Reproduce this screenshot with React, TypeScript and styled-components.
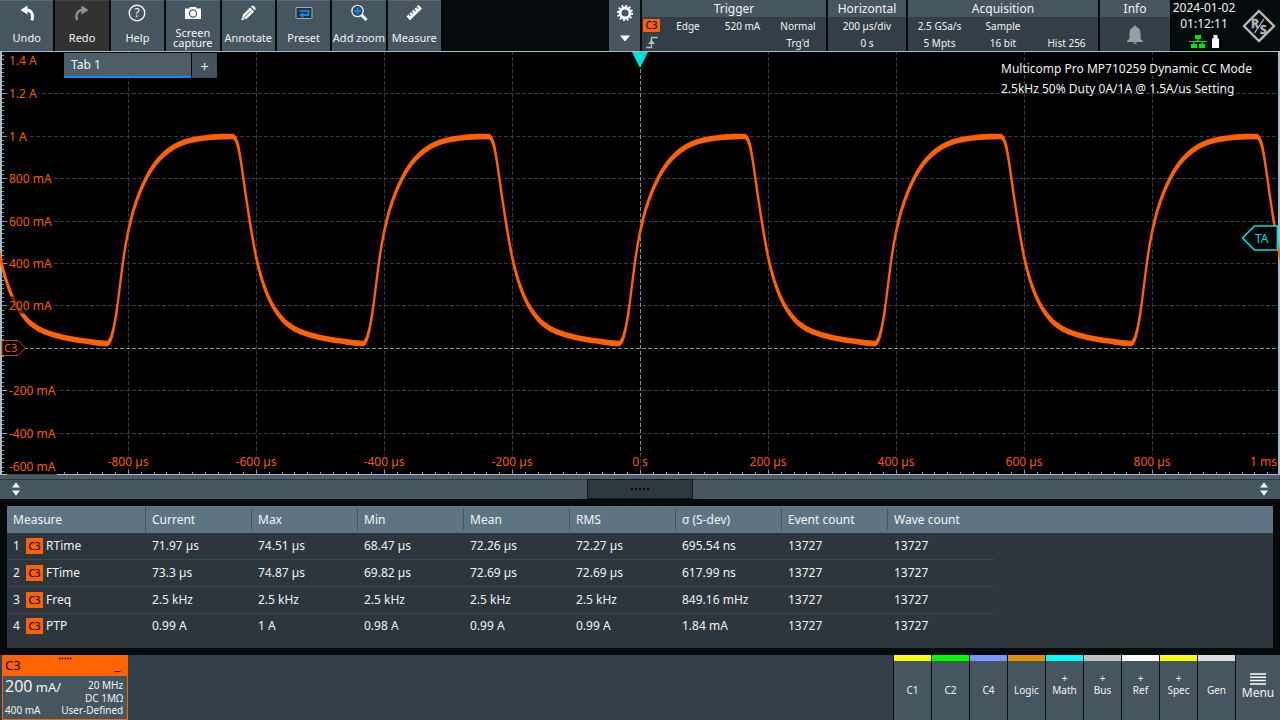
import React from 'react';
import styled, { createGlobalStyle, css } from 'styled-components';

const ORANGE = '#ff6200';
const SLATE = '#455661';
const PANEL = '#333f48';

const GlobalStyle = createGlobalStyle`
  * { box-sizing: border-box; }
  body {
    margin: 0;
    background: #050a0c;
    color: #f2f4f5;
    font-family: "Noto Sans", "Open Sans", sans-serif;
    font-size: 12px;
    line-height: 16px;
  }
  button {
    margin: 0;
    padding: 0;
    border: 0;
    color: inherit;
    font: inherit;
    cursor: pointer;
  }
`;

const Screen = styled.div`
  display: flex;
  flex-direction: column;
  min-height: 100vh;
`;

/* ---------- top bar ---------- */

const TopBar = styled.header`
  display: flex;
  gap: 2px;
  height: 51px;
  background: #050a0c;
`;

const ToolGroup = styled.nav`
  display: grid;
  grid-template-columns: repeat(8, 1fr);
  gap: 2px;
  flex: 0 0 441px;
`;

const ToolButton = styled.button<{ $off?: boolean }>`
  display: flex;
  flex-direction: column;
  align-items: center;
  padding: 1px 0 2px;
  background: ${(p) => (p.$off ? '#323232' : SLATE)};
  border-top: 1px solid ${(p) => (p.$off ? '#454545' : '#5c6c76')};
  font-size: 11px;
  line-height: 10px;
  white-space: nowrap;
`;

const ToolLabel = styled.span`
  display: flex;
  flex: 1;
  align-items: center;
  text-align: center;
  white-space: pre;
`;

const BarSpace = styled.div`
  flex: 1;
`;

const GearButton = styled.button`
  display: flex;
  flex-direction: column;
  align-items: center;
  justify-content: space-between;
  flex: 0 0 31px;
  padding: 3px 0 9px;
  background: ${SLATE};
`;

const InfoBlock = styled.section<{ $width: number }>`
  display: flex;
  flex-direction: column;
  flex: 0 0 ${(p) => p.$width}px;
  background: ${PANEL};
`;

const InfoTitle = styled.h2`
  margin: 0;
  height: 17px;
  background: ${SLATE};
  font-size: 12px;
  font-weight: 400;
  line-height: 17px;
  text-align: center;
`;

const InfoGrid = styled.div<{ $columns: string }>`
  display: grid;
  grid-template-columns: ${(p) => p.$columns};
  grid-auto-rows: 17px;
  justify-items: center;
  align-items: center;
  font-size: 10px;
  white-space: nowrap;
`;

const BellButton = styled.button`
  display: flex;
  flex: 1;
  align-items: center;
  justify-content: center;
  background: transparent;
`;

const Clock = styled.div`
  display: flex;
  flex-direction: column;
  align-items: center;
  flex: 0 0 64px;
  white-space: nowrap;
`;

const StatusIcons = styled.div`
  display: flex;
  gap: 5px;
  padding-top: 3px;
`;

const Brand = styled.div`
  display: flex;
  align-items: center;
  justify-content: center;
  flex: 0 0 42px;
`;

const Badge = styled.span`
  display: inline-block;
  width: 17px;
  height: 16px;
  background: ${ORANGE};
  color: #140800;
  font-size: 10px;
  font-weight: 500;
  line-height: 16px;
  text-align: center;
`;

const SmallBadge = styled(Badge)`
  height: 13px;
  line-height: 13px;
`;

/* ---------- plot ---------- */

const Plot = styled.main`
  position: relative;
  flex: 1 0 424px;
  background: #000;
`;

const PlotDrawing = styled.svg`
  position: absolute;
  inset: 0;
  width: 100%;
  height: 100%;
`;

const axisText = css`
  position: absolute;
  color: #f35d02;
  background: rgba(0, 0, 0, 0.62);
  white-space: nowrap;
`;

const LevelLabel = styled.span<{ $edge?: 'top' | 'bottom' }>`
  ${axisText}
  left: 7px;
  padding: 1px 2px 0;
  ${(p) => !p.$edge && 'transform: translateY(-50%);'}
  ${(p) => p.$edge === 'top' && 'top: 1px;'}
  ${(p) => p.$edge === 'bottom' && 'bottom: 0;'}
`;

const TimeLabel = styled.span<{ $last?: boolean }>`
  ${axisText}
  bottom: 5px;
  ${(p) => (p.$last ? 'right: 3px;' : 'transform: translateX(-50%);')}
`;

const Tabs = styled.div`
  position: absolute;
  top: 2px;
  left: 64px;
  display: flex;
  gap: 1px;
`;

const Tab = styled.button`
  width: 127px;
  height: 25px;
  padding: 1px 7px 0;
  background: #4d5e69;
  border-bottom: 2px solid #0a8cf5;
  text-align: left;
`;

const AddTab = styled.button`
  width: 25px;
  height: 25px;
  background: #43525c;
  font-size: 15px;
`;

const Note = styled.p`
  position: absolute;
  top: 8px;
  left: 1001px;
  margin: 0;
  line-height: 20px;
  white-space: nowrap;
`;

const TriggerPosition = styled.svg`
  position: absolute;
  top: 1px;
  left: 50%;
  transform: translateX(-50%);
`;

const ChannelFlag = styled.svg`
  position: absolute;
  left: 1px;
  transform: translateY(-50%);
`;

const TriggerLevel = styled.svg`
  position: absolute;
  right: 1px;
  transform: translateY(-50%);
`;

/* ---------- splitter ---------- */

const Splitter = styled.div`
  display: flex;
  align-items: center;
  justify-content: space-between;
  height: 24px;
  padding: 0 9px;
  border-top: 4px solid #4c5b68;
  background: ${SLATE};
  box-shadow: inset 0 1px 0 #2c3740;
`;

const SplitButton = styled.button`
  display: flex;
  background: transparent;
`;

const Grip = styled.button`
  display: flex;
  justify-content: center;
  width: 106px;
  height: 20px;
  padding-top: 8px;
  border: 1px solid #12191d;
  background: #2d373e;
`;

/* ---------- measurement table ---------- */

const Results = styled.section`
  padding: 7px;
`;

const ResultsBody = styled.div`
  height: 142px;
  background: linear-gradient(#5e7483 0 27px, #2c363c 27px);
`;

const Table = styled.table`
  width: 987px;
  height: 133px;
  table-layout: fixed;
  border-collapse: separate;
  border-spacing: 0;
`;

const HeadCell = styled.th<{ $first?: boolean }>`
  width: ${(p) => (p.$first ? 139 : 106)}px;
  height: 27px;
  padding: 0 6px;
  font-weight: 400;
  text-align: left;
  background: linear-gradient(#43535f, #43535f) right / 1px ${(p) => (p.$first ? '100%' : '21px')} no-repeat;
  &:last-child {
    background: none;
  }
`;

const Cell = styled.td`
  padding: 0 6px;
  border-bottom: 1px solid #3a4852;
  tr:last-child > & {
    border-bottom: 0;
  }
`;

const NameCell = styled.div`
  display: grid;
  grid-template-columns: 13px 17px auto;
  align-items: center;
`;

const Name = styled.span`
  padding-left: 3px;
`;

/* ---------- bottom bar ---------- */

const BottomBar = styled.footer`
  display: flex;
  align-items: stretch;
  height: 65px;
  background: ${PANEL};
`;

const Channel = styled.button`
  display: flex;
  flex-direction: column;
  flex: 0 0 125px;
  margin-left: 2px;
  border: 1px solid ${ORANGE};
  background: ${SLATE};
  line-height: 13px;
  text-align: left;
`;

const ChannelHead = styled.span`
  position: relative;
  display: flex;
  align-items: center;
  justify-content: space-between;
  align-self: stretch;
  height: 20px;
  padding: 0 7px 2px 2px;
  background: ${ORANGE};
  color: #140800;
  font-size: 13px;
`;

const HeadGrip = styled.svg`
  position: absolute;
  top: 1px;
  left: 55px;
`;

const ChannelBody = styled.span`
  display: grid;
  grid-template-columns: auto auto;
  grid-template-rows: 13px 12px 13px;
  align-self: stretch;
  flex: 1;
  padding: 3px 4px 0 2px;
  font-size: 10px;
`;

const Scale = styled.span`
  grid-row: span 2;
  padding-top: 1px;
  font-size: 13px;
  white-space: nowrap;
`;

const ScaleValue = styled.span`
  font-size: 16px;
`;

const Right = styled.span`
  text-align: right;
  white-space: nowrap;
`;

const Signals = styled.div`
  display: flex;
  gap: 1px;
  margin-left: auto;
  padding-left: 1px;
  background: #0c1114;
`;

const Signal = styled.button<{ $color: string }>`
  display: flex;
  flex-direction: column;
  align-items: center;
  justify-content: flex-end;
  width: 37px;
  padding-bottom: 24px;
  border-top: 6px solid ${(p) => p.$color};
  background: ${SLATE};
  font-size: 10px;
  line-height: 12px;
`;

const MenuButton = styled.button`
  display: flex;
  flex-direction: column;
  align-items: center;
  width: 44px;
  padding-top: 18px;
  background: ${SLATE};
`;

/* ---------- icons ---------- */

const Icon = ({ children }: { children: React.ReactNode }) => (
  <svg width="24" height="24" viewBox="0 0 24 24" fill="none" aria-hidden="true">
    {children}
  </svg>
);

const icons = {
  undo: (
    <Icon>
      <path d="M5.500 8 12.500 3.600V12.600Z" fill="#fff" />
      <path d="M11 8C16.500 8 18.600 12 17 18.300" stroke="#fff" strokeWidth="2.800" />
    </Icon>
  ),
  redo: (
    <Icon>
      <path d="M18.500 8 11.500 3.600V12.600Z" fill="#929292" />
      <path d="M13 8C7.500 8 5.400 12 7 18.300" stroke="#929292" strokeWidth="2.300" />
    </Icon>
  ),
  help: (
    <Icon>
      <circle cx="12" cy="11" r="7.800" stroke="#f2f4f5" strokeWidth="1.400" />
      <text x="12" y="15.200" textAnchor="middle" fontSize="12" fill="#f2f4f5">?</text>
    </Icon>
  ),
  camera: (
    <Icon>
      <path d="M4 6.500h4l1-1.500h6l1 1.500h4v10.500H4Z" fill="#fff" />
      <circle cx="12" cy="11.500" r="3.600" fill="#f4f4f4" stroke="#4d5960" strokeWidth="1.200" />
    </Icon>
  ),
  pencil: (
    <Icon>
      <path d="M5.300 18.300 7 12.600 14 5.600 18 9.600 11 16.600Z" fill="#fff" />
      <path d="M15 4.600 16 3.800Q17 3.400 18 4.300L19.400 5.700Q20 6.500 19.400 7.400L18.700 8.300Z" fill="#fff" />
      <path d="M9 14.700 14.600 9" stroke={SLATE} strokeWidth="1" />
      <path d="M6.600 14.800 8.900 17" stroke={SLATE} strokeWidth=".8" />
    </Icon>
  ),
  preset: (
    <Icon>
      <rect x="4" y="5.500" width="16" height="11" rx="1" fill="#26323a" stroke="#a3adb3" />
      <path d="M7.500 8.800h9v4.400H11" stroke="#0a8cf5" strokeWidth="1.800" />
      <path d="M11.500 10.300v5.800L7 13.200Z" fill="#0a8cf5" />
    </Icon>
  ),
  zoom: (
    <Icon>
      <path d="M14.500 13 19.500 18" stroke="#fff" strokeWidth="3" />
      <circle cx="10.500" cy="9" r="5.600" fill="#33414a" stroke="#e8eef2" strokeWidth="1.400" />
      <path d="M7 9h7M10.500 5.500v7" stroke="#0a8cf5" strokeWidth="2" />
    </Icon>
  ),
  ruler: (
    <Icon>
      <path d="M4.500 14.500 16.500 3 20 6.500 8 18.200Z" fill="#fff" />
      <path d="m7 12.100 1.700 1.700M9.500 9.700l1.700 1.700M12 7.300l1.700 1.700M14.500 4.900 16.200 6.600" stroke={SLATE} strokeWidth="1.100" />
    </Icon>
  ),
};

const UpDown = () => (
  <svg width="14" height="16" viewBox="0 0 14 16" aria-hidden="true">
    <path d="M7 1.500 11 6.500H3ZM7 14.500 11 9.500H3Z" fill="#fff" />
  </svg>
);

/* ---------- waveform ---------- */

const PERIOD = 256;

/* One period of the trace, starting at the foot of a rising edge. */
const CYCLE: [number, number][] = [
  [107, 292.5], [110, 289.5], [113, 280], [116.5, 261], [120, 234], [123.700, 206],
  [126.300, 190], [129, 177], [132.500, 162.500], [137.700, 146.500], [142, 136], [148.500, 122.800],
  [157, 110.500], [168.500, 99.500], [180, 92.800], [192, 89], [208, 86.500], [222, 85.600],
  [233, 85.500], [235.500, 88], [238.300, 96], [240.700, 109], [244.300, 134], [247.700, 157],
  [251.700, 182], [255.700, 204], [260, 222], [266.700, 242], [275, 258.500], [286.700, 272.500],
  [300, 280.500], [320, 286.500], [341, 290],
];

const TRACE: [number, number][] = [-2, -1, 0, 1, 2, 3, 4].flatMap((n) =>
  CYCLE.map(([x, y]) => [x + n * PERIOD, y] as [number, number]),
);

/* Monotone cubic through the points, so the flat tops do not overshoot. */
function slopes(pts: [number, number][]) {
  const d = pts.slice(1).map((p, i) => (p[1] - pts[i][1]) / (p[0] - pts[i][0]));
  return pts.map((_, i) => {
    if (i === 0) return d[0];
    if (i === pts.length - 1) return d[i - 1];
    if (d[i - 1] * d[i] <= 0) return 0;
    return (2 * d[i - 1] * d[i]) / (d[i - 1] + d[i]);
  });
}

function curve(pts: [number, number][], dy: number, start: string) {
  const m = slopes(pts);
  let out = `${start}${pts[0][0]} ${pts[0][1] + dy}`;
  for (let i = 1; i < pts.length; i++) {
    const [x0, y0] = pts[i - 1];
    const [x1, y1] = pts[i];
    const h = (x1 - x0) / 3;
    out += `C${x0 + h} ${y0 + m[i - 1] * h + dy} ${x1 - h} ${y1 - m[i] * h + dy} ${x1} ${y1 + dy}`;
  }
  return out;
}

const TRACE_PATH = `${curve(TRACE, -1.9, 'M')}${curve([...TRACE].reverse(), 1.9, 'L')}Z`;

const H = 424;
const range = (n: number) => Array.from({ length: n }, (_, i) => i);
const rowY = (i: number) => Math.round((H * i) / 10) + 0.5;

const GRID_H = [1, 2, 3, 4, 5, 6, 8, 9].map((i) => `M0 ${rowY(i)}H1280`).join('');
const GRID_V = [1, 2, 3, 4, 6, 7, 8, 9].map((i) => `M${i * 128 + 0.5} 0V${H}`).join('');
const TICKS_Y = range(100).map((i) => `M1 ${Math.round(i * 4.24) + 0.5}h${i % 10 ? 3 : 6}`).join('');
const TICKS_X = range(96).map((i) => {
  const n = i + 5;
  return `M${Math.round(n * 12.8) + 0.5} ${H}v${n % 10 ? -3 : -6}`;
}).join('');

const LEVELS = ['1.2 A', '1 A', '800 mA', '600 mA', '400 mA', '200 mA', '', '-200 mA', '-400 mA'];
const TIMES = ['-800 µs', '-600 µs', '-400 µs', '-200 µs', '0 s', '200 µs', '400 µs', '600 µs', '800 µs'];

const HEADS = ['Measure', 'Current', 'Max', 'Min', 'Mean', 'RMS', 'σ (S-dev)', 'Event count', 'Wave count'];
const ROWS = [
  ['RTime', '71.97 µs', '74.51 µs', '68.47 µs', '72.26 µs', '72.27 µs', '695.54 ns', '13727', '13727'],
  ['FTime', '73.3 µs', '74.87 µs', '69.82 µs', '72.69 µs', '72.69 µs', '617.99 ns', '13727', '13727'],
  ['Freq', '2.5 kHz', '2.5 kHz', '2.5 kHz', '2.5 kHz', '2.5 kHz', '849.16 mHz', '13727', '13727'],
  ['PTP', '0.99 A', '1 A', '0.98 A', '0.99 A', '0.99 A', '1.84 mA', '13727', '13727'],
];

const TOOLS: [string, keyof typeof icons][] = [
  ['Undo', 'undo'], ['Redo', 'redo'], ['Help', 'help'], ['Screen\ncapture', 'camera'],
  ['Annotate', 'pencil'], ['Preset', 'preset'], ['Add zoom', 'zoom'], ['Measure', 'ruler'],
];

const SIGNALS: [string, string, boolean][] = [
  ['C1', '#ffff00', false], ['C2', '#00ff00', false], ['C4', '#7a97ff', false],
  ['Logic', '#e09000', false], ['Math', '#00ffff', true], ['Bus', '#bfbfbf', true],
  ['Ref', '#ffffff', true], ['Spec', '#ffff00', true], ['Gen', '#dedede', false],
];

export default function App() {
  return (
    <Screen>
      <GlobalStyle />
      <TopBar>
        <ToolGroup aria-label="Tools">
          {TOOLS.map(([label, icon]) => (
            <ToolButton key={label} $off={icon === 'redo'}>
              {icons[icon]}
              <ToolLabel>{label}</ToolLabel>
            </ToolButton>
          ))}
        </ToolGroup>
        <BarSpace />
        <GearButton aria-label="Settings">
          <svg width="20" height="20" viewBox="0 0 20 20" fill="none" stroke="#fff">
            <circle cx="10" cy="10" r="5" strokeWidth="2.800" />
            <circle cx="10" cy="10" r="7.200" strokeWidth="1.800" strokeDasharray="1.900 1.870" />
          </svg>
          <svg width="10" height="7" viewBox="0 0 10 7"><path d="M0 .5h10L5 6.500Z" fill="#fff" /></svg>
        </GearButton>
        <InfoBlock $width={184}>
          <InfoTitle>Trigger</InfoTitle>
          <InfoGrid $columns="19px 54px 55px 56px">
            <SmallBadge>C3</SmallBadge>
            <span>Edge</span>
            <span>520 mA</span>
            <span>Normal</span>
            <svg width="14" height="13" viewBox="0 0 14 13" fill="none" stroke="#b4bbc0" strokeWidth="1.300">
              <path d="M1 11.500h5.500V1.500H13" />
              <path d="M3 8 6.500 3.700 10 8Z" fill="#b4bbc0" stroke="none" />
            </svg>
            <span />
            <span />
            <span>Trg'd</span>
          </InfoGrid>
        </InfoBlock>
        <InfoBlock $width={78}>
          <InfoTitle>Horizontal</InfoTitle>
          <InfoGrid $columns="1fr">
            <span>200 µs/div</span>
            <span>0 s</span>
          </InfoGrid>
        </InfoBlock>
        <InfoBlock $width={190}>
          <InfoTitle>Acquisition</InfoTitle>
          <InfoGrid $columns="63px 64px 63px">
            <span>2.5 GSa/s</span>
            <span>Sample</span>
            <span />
            <span>5 Mpts</span>
            <span>16 bit</span>
            <span>Hist 256</span>
          </InfoGrid>
        </InfoBlock>
        <InfoBlock $width={70}>
          <InfoTitle>Info</InfoTitle>
          <BellButton aria-label="Notifications">
            <svg width="18" height="19" viewBox="0 0 18 19">
              <path d="M9 .5q1.300 0 1.500 1.500Q14.500 3.500 14.500 8v6l2.500 2v1H1v-1l2.500-2V8Q3.500 3.500 7.500 2 7.700.5 9 .5Z" fill="#999fa2" />
              <path d="M7 17.500h4q-.5 1.500-2 1.500t-2-1.500Z" fill="#999fa2" />
            </svg>
          </BellButton>
        </InfoBlock>
        <Clock>
          <span>2024-01-02</span>
          <span>01:12:11</span>
          <StatusIcons>
            <svg width="18" height="14" viewBox="0 0 18 14" fill="#00e800">
              <path d="M6 0h6v4H9.700v2H18v1H14v2h2v4h-6V9h2.700V7H5.300v2H8v4H2V9h2V7H0V6h8.300V4H6Z" />
            </svg>
            <svg width="7" height="14" viewBox="0 0 7 14" fill="#fff">
              <path d="M1.500 0h4v3.500H7V13H0V3.500h1.500Z" />
            </svg>
          </StatusIcons>
        </Clock>
        <Brand>
          <svg width="34" height="34" viewBox="0 0 34 34" fill="none" role="img" aria-label="R&S">
            <path d="M17 2 32 17 17 32 2 17Z" stroke="#b9b9b9" strokeWidth="2.300" />
            <text x="9" y="19" fontSize="12" fontWeight="700" fill="#b9b9b9" stroke="#b9b9b9" strokeWidth=".4">R</text>
            <text x="18" y="25" fontSize="12" fontWeight="700" fill="#b9b9b9" stroke="#b9b9b9" strokeWidth=".4">S</text>
            <path d="M12.500 24 22 10" stroke="#b9b9b9" strokeWidth="1.300" />
          </svg>
        </Brand>
      </TopBar>

      <Plot>
        <PlotDrawing viewBox="0 0 1280 424" preserveAspectRatio="none" aria-label="Waveform">
          <g fill="none" shapeRendering="crispEdges">
            <path d={GRID_H} stroke="#3a3a3a" strokeDasharray="4 2" />
            <path d={GRID_V} stroke="#3a3a3a" strokeDasharray="4 2" />
            <path d={`M0 ${rowY(7)}H1280M640.5 0V424`} stroke="#8a8a8a" strokeDasharray="4 2" />
            <path d={TICKS_Y} stroke="#8b9aa6" />
            <path d={TICKS_X} stroke="#8b9aa6" />
            <path d="M0 .5H1280M0 423.500H1280" stroke="#a9bac6" />
            <path d="M1 0V424M1279 0V424" stroke="#a9bac6" strokeWidth="2" />
          </g>
          <path d={TRACE_PATH} fill={ORANGE} stroke={ORANGE} strokeWidth="1.900" strokeLinejoin="round" />
        </PlotDrawing>
        <LevelLabel $edge="top">1.4 A</LevelLabel>
        {LEVELS.map((t, i) => t && (
          <LevelLabel key={t} style={{ top: `${(i + 1) * 10}%` }}>{t}</LevelLabel>
        ))}
        <LevelLabel $edge="bottom">-600 mA</LevelLabel>
        {TIMES.map((t, i) => (
          <TimeLabel key={t} style={{ left: `${(i + 1) * 10}%` }}>{t}</TimeLabel>
        ))}
        <TimeLabel $last>1 ms</TimeLabel>
        <ChannelFlag width="26" height="17" viewBox="0 0 26 17" style={{ top: '70%' }}>
          <path d="M1 1H17L24.500 8.500 17 16H1Z" fill="#000" stroke="#c04c04" />
          <text x="3" y="12" fontSize="11" fill="#f35d02">C3</text>
        </ChannelFlag>
        <TriggerLevel width="38" height="27" viewBox="0 0 38 27" style={{ top: '44%' }}>
          <path d="M1.500 13.500 13.500 1.500H36.500V25.500H13.500Z" fill="#000" stroke="#00dede" strokeWidth="1.700" />
          <text x="14" y="18" fontSize="12" fill="#00dede">TA</text>
        </TriggerLevel>
        <TriggerPosition width="16" height="16" viewBox="0 0 16 16">
          <path d="M0 0H16L8 16Z" fill="#00dede" />
        </TriggerPosition>
        <Tabs>
          <Tab>Tab 1</Tab>
          <AddTab aria-label="Add tab">+</AddTab>
        </Tabs>
        <Note>
          Multicomp Pro MP710259 Dynamic CC Mode
          <br />
          2.5kHz 50% Duty 0A/1A @ 1.5A/us Setting
        </Note>
      </Plot>

      <Splitter>
        <SplitButton aria-label="Resize left"><UpDown /></SplitButton>
        <Grip aria-label="Drag to resize">
          <svg width="20" height="3" viewBox="0 0 20 3">
            <path d="M1 1H20" stroke="#050a0c" strokeWidth="2" strokeDasharray="2 2" />
          </svg>
        </Grip>
        <SplitButton aria-label="Resize right"><UpDown /></SplitButton>
      </Splitter>

      <Results>
        <ResultsBody>
          <Table>
            <thead>
              <tr>
                {HEADS.map((h, i) => <HeadCell key={h} $first={i === 0} scope="col">{h}</HeadCell>)}
              </tr>
            </thead>
            <tbody>
              {ROWS.map(([name, ...values], i) => (
                <tr key={name}>
                  <Cell>
                    <NameCell>
                      <span>{i + 1}</span>
                      <Badge>C3</Badge>
                      <Name>{name}</Name>
                    </NameCell>
                  </Cell>
                  {values.map((v, j) => <Cell key={j}>{v}</Cell>)}
                </tr>
              ))}
            </tbody>
          </Table>
        </ResultsBody>
      </Results>

      <BottomBar>
        <Channel>
          <ChannelHead>
            C3
            <HeadGrip width="14" height="3" viewBox="0 0 14 3">
              <path d="M1 1.500H14" stroke="#140800" strokeWidth="1.500" strokeDasharray="1.500 1.200" />
            </HeadGrip>
            <span>_</span>
          </ChannelHead>
          <ChannelBody>
            <Scale><ScaleValue>200</ScaleValue> mA/</Scale>
            <Right>20 MHz</Right>
            <Right>DC 1MΩ</Right>
            <span>400 mA</span>
            <Right>User-Defined</Right>
          </ChannelBody>
        </Channel>
        <Signals>
          {SIGNALS.map(([label, color, plus]) => (
            <Signal key={label} $color={color}>
              {plus && <span>+</span>}
              <span>{label}</span>
            </Signal>
          ))}
          <MenuButton>
            <svg width="16" height="12" viewBox="0 0 16 12">
              <path d="M0 1H16M0 4.300H16M0 7.600H16M0 10.900H16" stroke="#fff" strokeWidth="1.500" />
            </svg>
            Menu
          </MenuButton>
        </Signals>
      </BottomBar>
    </Screen>
  );
}
